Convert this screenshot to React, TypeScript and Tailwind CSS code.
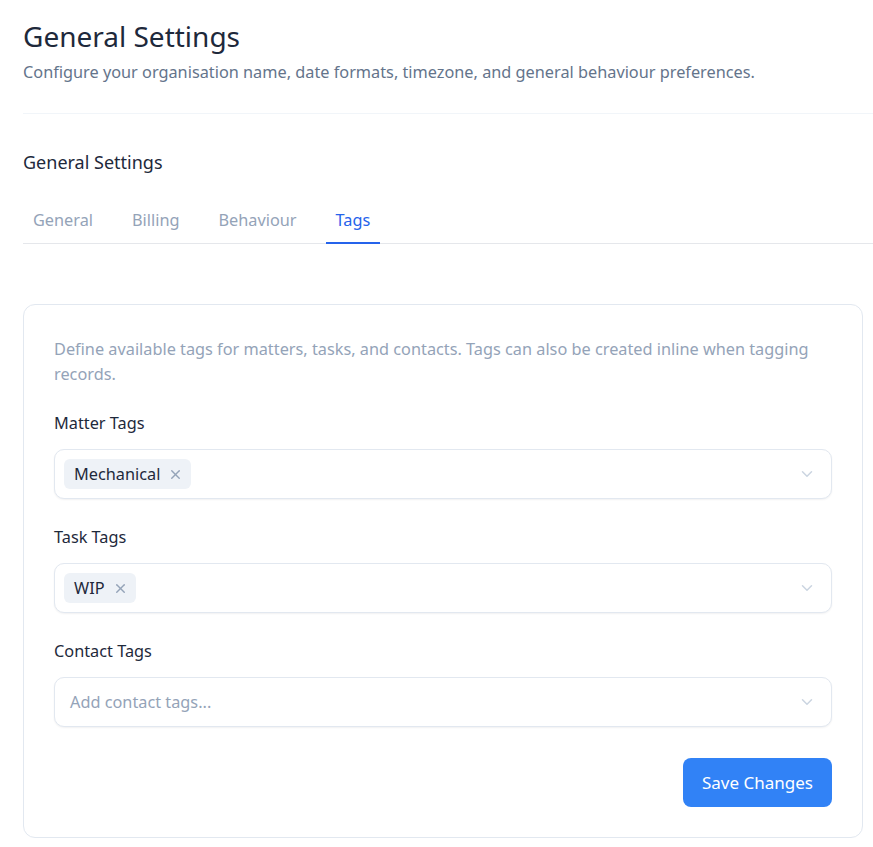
import React, { useState } from 'react';
import { ChevronDown, X } from 'lucide-react';

const tabs = ['General', 'Billing', 'Behaviour', 'Tags'];

interface TagFieldProps {
  label: string;
  tags: string[];
  placeholder: string;
}

const TagField: React.FC<TagFieldProps> = ({ label, tags, placeholder }) => (
  <div>
    <label className="block text-[16.3px] leading-6 text-[#1e293b] mb-[14px]">{label}</label>
    <div className="flex items-center h-[50px] pl-[9px] pr-[15px] rounded-[10px] border border-[#e2e8f0] bg-white shadow-[0_1px_2px_rgba(15,23,42,0.06)]">
      <div className="flex flex-1 items-center gap-2">
        {tags.length === 0 && (
          <span className="pl-[6px] text-[16.3px] text-[#94a3b8]">{placeholder}</span>
        )}
        {tags.map((t) => (
          <span
            key={t}
            className="flex items-center gap-[8px] h-[30px] pl-[10px] pr-[8px] rounded-[6px] bg-[#eef2f7] text-[16.3px] text-[#1e293b]"
          >
            {t}
            <X className="w-[15px] h-[15px] text-[#94a3b8]" strokeWidth={2.25} />
          </span>
        ))}
      </div>
      <ChevronDown className="w-[18px] h-[18px] text-[#cbd5e1]" strokeWidth={2} />
    </div>
  </div>
);

export default function App() {
  const [active, setActive] = useState('Tags');
  return (
    <div className="min-h-screen bg-white pl-[23px] pt-[18px] font-['Noto_Sans',sans-serif]">
      <h1 className="text-[28px] leading-9 text-[#1e293b]">General Settings</h1>
      <p className="mt-[6px] text-[16.3px] leading-6 text-[#64748b]">
        Configure your organisation name, date formats, timezone, and general behaviour preferences.
      </p>
      <div className="mt-[29px] border-t border-[#f1f5f9]" />

      <h2 className="mt-[34px] text-[18px] leading-7 text-[#1e293b]">General Settings</h2>

      <div className="mt-[32px] flex gap-[19px] border-b border-[#e5e7eb]">
        {tabs.map((t) => (
          <button
            key={t}
            onClick={() => setActive(t)}
            className={`-mb-px px-[10px] pb-[10px] text-[16.3px] leading-6 border-b-2 ${
              active === t ? 'text-[#2563eb] border-[#2563eb]' : 'text-[#94a3b8] border-transparent'
            }`}
          >
            {t}
          </button>
        ))}
      </div>

      <div className="mt-[60px] mr-[10px] mb-[10px] rounded-[12px] border border-[#e2e8f0] px-[30px] pt-[32px] pb-[30px]">
        <p className="text-[16.3px] leading-[25px] text-[#94a3b8]">
          Define available tags for matters, tasks, and contacts. Tags can also be created inline when tagging records.
        </p>
        <div className="mt-[24px] flex flex-col gap-[26px]">
          <TagField label="Matter Tags" tags={['Mechanical']} placeholder="Add matter tags..." />
          <TagField label="Task Tags" tags={['WIP']} placeholder="Add task tags..." />
          <TagField label="Contact Tags" tags={[]} placeholder="Add contact tags..." />
        </div>
        <div className="mt-[31px] flex justify-end">
          <button className="h-[49px] px-[19px] rounded-[8px] bg-[#3182f6] text-white text-[17px]">
            Save Changes
          </button>
        </div>
      </div>
    </div>
  );
}
